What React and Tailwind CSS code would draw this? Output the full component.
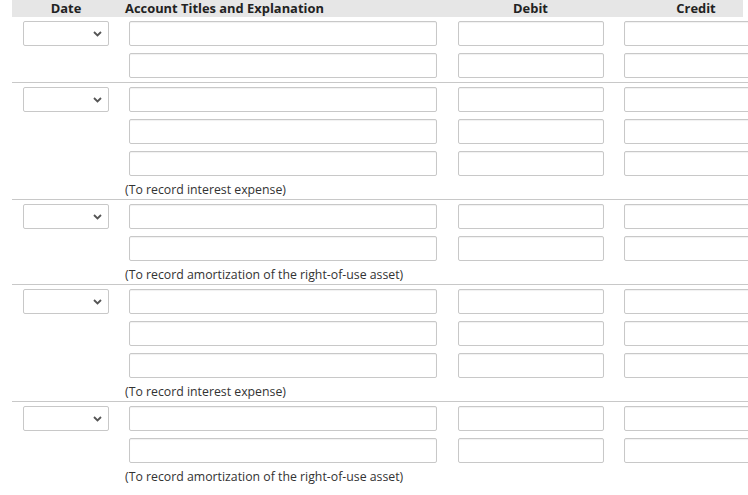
import React from 'react';

const groups = [
  { rows: 2, note: null },
  { rows: 3, note: '(To record interest expense)' },
  { rows: 2, note: '(To record amortization of the right-of-use asset)' },
  { rows: 3, note: '(To record interest expense)' },
  { rows: 2, note: '(To record amortization of the right-of-use asset)' },
];

const inputCls =
  'block h-[25px] rounded-[2px] border border-[#c8c8c8] bg-white shadow-[inset_0_1px_1px_rgba(0,0,0,0.06)] outline-none';

function DateSelect() {
  return (
    <div className="relative ml-[11px] h-[25px] w-[86px] rounded-[2px] border border-[#c8c8c8] bg-white">
      <svg className="absolute right-[6px] top-[9px]" width="9" height="6" viewBox="0 0 9 6">
        <path d="M1 1l3.5 3.5L8 1" fill="none" stroke="#555" strokeWidth="1.8" />
      </svg>
    </div>
  );
}

function EntryRow({ first }) {
  return (
    <div className="flex h-[25px] items-start">
      <div className="w-[108px] shrink-0">{first && <DateSelect />}</div>
      <div className="w-[327px] shrink-0">
        <input className={`${inputCls} ml-[9px] w-[308px]`} />
      </div>
      <div className="w-[167px] shrink-0">
        <input className={`${inputCls} ml-[11px] w-[146px]`} />
      </div>
      <div className="w-[164px] shrink-0">
        <input className={`${inputCls} ml-[10px] w-[146px]`} />
      </div>
    </div>
  );
}

export default function App() {
  return (
    <div className="w-full overflow-hidden bg-white font-['Open_Sans',sans-serif]">
      <div className="w-[800px] pl-[12px]">
        <div className="flex h-[17px] w-[731px] overflow-hidden bg-[#e6e6e6] text-[12.9px] font-bold leading-[17px] text-[#222]">
          <div className="w-[108px] shrink-0 text-center">Date</div>
          <div className="w-[327px] shrink-0 pl-[5px]">Account Titles and Explanation</div>
          <div className="w-[167px] shrink-0 text-center">Debit</div>
          <div className="w-[164px] shrink-0 text-center">Credit</div>
        </div>

        {groups.map((g, gi) => (
          <div
            key={gi}
            className={gi === 0 ? 'pt-[4px] pb-[4px]' : 'border-t border-[#c8c8c8] pt-[4px]'}
          >
            <div className="flex flex-col gap-[7px]">
              {Array.from({ length: g.rows }).map((_, ri) => (
                <EntryRow key={ri} first={ri === 0} />
              ))}
            </div>
            {g.note && (
              <div className="h-[23px] pl-[113px] pt-[7px] text-[12.3px] leading-[14px] text-[#333]">
                {g.note}
              </div>
            )}
          </div>
        ))}
      </div>
    </div>
  );
}
